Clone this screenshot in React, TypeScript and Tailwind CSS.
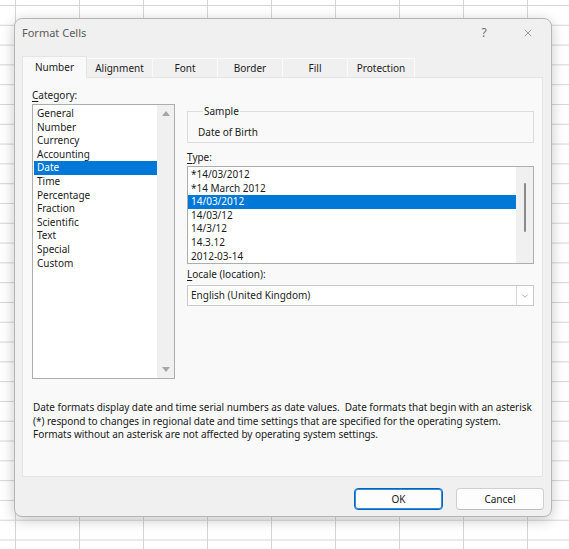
import { X, ChevronDown } from "lucide-react";

const categories = [
  "General",
  "Number",
  "Currency",
  "Accounting",
  "Date",
  "Time",
  "Percentage",
  "Fraction",
  "Scientific",
  "Text",
  "Special",
  "Custom",
];

const dateTypes = [
  "*14/03/2012",
  "*14 March 2012",
  "14/03/2012",
  "14/03/12",
  "14/3/12",
  "14.3.12",
  "2012-03-14",
];

const tabs = [
  { label: "Number", width: "w-[65px]" },
  { label: "Alignment", width: "w-[66px]" },
  { label: "Font", width: "w-[65px]" },
  { label: "Border", width: "w-[65px]" },
  { label: "Fill", width: "w-[65px]" },
  { label: "Protection", width: "w-[67px]" },
];

const Triangle = ({ up }: { up?: boolean }) => (
  <svg width="8" height="5" viewBox="0 0 8 5">
    <path d={up ? "M0 5 L4 0 L8 5 Z" : "M0 0 L8 0 L4 5 Z"} fill="#a6a6a6" />
  </svg>
);

export default function App() {
  return (
    <div className="w-[569px] h-[549px] overflow-hidden bg-white bg-[linear-gradient(to_right,#d5d5d5_1px,transparent_1px),linear-gradient(to_bottom,#d5d5d5_1px,transparent_1px)] bg-[size:64px_19.8px] bg-[position:15px_5px] pt-[18px] pl-[14px] font-['Noto_Sans',sans-serif] text-[10px] text-[#1b1b1b]">
      {/* dialog */}
      <div className="w-[538px] h-[499px] bg-[#f0f0f0] border border-[#b6b6b6] rounded-[8px] shadow-[0_3px_14px_rgba(0,0,0,0.22)] flex flex-col">
        {/* title bar */}
        <div className="h-[37px] flex items-start pt-[6px] pl-[7px]">
          <span className="text-[11px] leading-[15px] text-[#5c5c5c]">Format Cells</span>
          <div className="ml-auto mr-[17px] flex items-center h-[15px]">
            <span className="w-[12px] text-center text-[12px] text-[#707070]">?</span>
            <span className="ml-[32px] w-[12px] flex justify-center">
              <X className="w-[16px] h-[16px] text-[#4a4a4a]" strokeWidth={1} />
            </span>
          </div>
        </div>

        {/* tabs */}
        <div className="h-[21px] pl-[7px] flex items-end">
          {tabs.map((t, i) =>
            i === 0 ? (
              <div
                key={t.label}
                className={`${t.width} h-[22px] -mb-[1px] relative z-10 bg-[#f9f9f9] border border-b-0 border-[#e4e4e4] flex items-center justify-center`}
              >
                {t.label}
              </div>
            ) : (
              <div
                key={t.label}
                className={`${t.width} h-[19px] bg-[#f0f0f0] border border-b-0 border-l-0 border-[#fafafa] flex items-center justify-center`}
              >
                {t.label}
              </div>
            )
          )}
        </div>

        {/* panel */}
        <div className="ml-[7px] w-[521px] h-[400px] bg-[#f9f9f9] border border-[#e4e4e4] pt-[10px] pl-[9px]">
          <div className="flex items-start">
            {/* category */}
            <div className="w-[143px]">
              <div className="leading-[14px] h-[14px]">
                <span className="underline underline-offset-[2px]">C</span>ategory:
              </div>
              <div className="mt-[2px] h-[275px] bg-white border border-[#adadad] flex">
                <div className="flex-1 pt-[2px] pl-[1px]">
                  {categories.map((c) => (
                    <div
                      key={c}
                      className={`h-[13.6px] leading-[13.6px] pl-[3px] ${
                        c === "Date" ? "bg-[#0078d7] text-white" : ""
                      }`}
                    >
                      {c}
                    </div>
                  ))}
                </div>
                <div className="w-[17px] bg-[#f0f0f0] flex flex-col items-center justify-between py-[6px]">
                  <Triangle up />
                  <Triangle />
                </div>
              </div>
            </div>

            {/* right column */}
            <div className="ml-[12px] w-[347px] mt-[17px]">
              <fieldset className="border border-[#dcdcdc] pl-[10px] pt-[8px] pb-[3px]">
                <legend className="ml-[5px] px-[1px] leading-[12px]">Sample</legend>
                <div className="leading-[14px]">Date of Birth</div>
              </fieldset>

              <div className="mt-[7px] leading-[14px] h-[14px]">
                <span className="underline underline-offset-[2px]">T</span>ype:
              </div>
              <div className="mt-[2px] h-[98px] bg-white border border-[#adadad] flex">
                <div className="flex-1 pt-[1px]">
                  {dateTypes.map((d, i) => (
                    <div
                      key={d}
                      className={`h-[13.6px] leading-[13.6px] pl-[3px] ${
                        i === 2 ? "bg-[#0078d7] text-white" : ""
                      }`}
                    >
                      {d}
                    </div>
                  ))}
                </div>
                <div className="w-[17px] bg-[#f0f0f0] flex justify-center pt-[16px]">
                  <div className="w-[2px] h-[49px] rounded-full bg-[#8a8a8a]" />
                </div>
              </div>

              <div className="mt-[3px] leading-[14px] h-[14px]">
                <span className="underline underline-offset-[2px]">L</span>ocale (location):
              </div>
              <div className="mt-[4px] h-[21px] bg-white border border-[#c9c9c9] flex items-center">
                <span className="flex-1 pl-[3px]">English (United Kingdom)</span>
                <span className="w-[17px] h-full border-l border-[#d6d6d6] flex items-center justify-center">
                  <ChevronDown className="w-[10px] h-[10px] text-[#7a7a7a]" strokeWidth={1.5} />
                </span>
              </div>
            </div>
          </div>

          <p className="mt-[22px] pl-[1px] leading-[13.5px] tracking-[-0.05px]">
            Date formats display date and time serial numbers as date values.&nbsp; Date formats that begin with an asterisk
            <br />
            (*) respond to changes in regional date and time settings that are specified for the operating system.
            <br />
            Formats without an asterisk are not affected by operating system settings.
          </p>
        </div>

        {/* buttons */}
        <div className="mt-[11px] pr-[7px] flex justify-end gap-[13px]">
          <button className="w-[89px] h-[22px] bg-[#fdfdfd] border border-[#0067c0] rounded-[4px] shadow-[inset_0_0_0_1px_#3b8ad6]">
            OK
          </button>
          <button className="w-[88px] h-[22px] bg-[#fdfdfd] border border-[#d0d0d0] border-b-[#bdbdbd] rounded-[4px]">
            Cancel
          </button>
        </div>
      </div>
    </div>
  );
}
